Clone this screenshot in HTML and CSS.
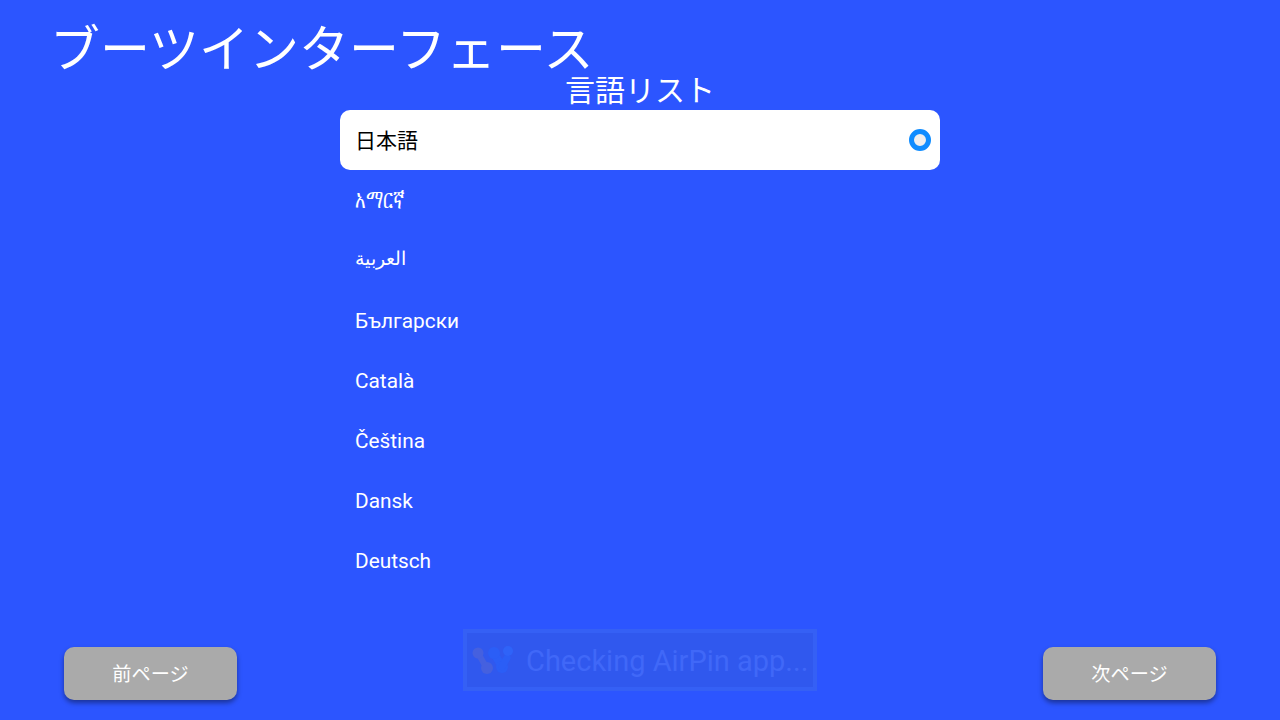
FILE: index.html
```html
<!DOCTYPE html>
<html lang="ja">
<head>
  <meta charset="UTF-8">
  <title>ブーツインターフェース</title>
  <link rel="stylesheet" href="styles.css">
</head>
<body>

  <h1 class="title">ブーツインターフェース</h1>
  <h2 class="subtitle">言語リスト</h2>

  <ul class="lang-list">
    <li class="lang-item selected">日本語<span class="radio"></span></li>
    <li class="lang-item"><span class="amharic">አማርኛ</span></li>
    <li class="lang-item arabic" dir="ltr">العربية</li>
    <li class="lang-item">Български</li>
    <li class="lang-item">Català</li>
    <li class="lang-item">Čeština</li>
    <li class="lang-item">Dansk</li>
    <li class="lang-item">Deutsch</li>
  </ul>

  <div class="footer">
    <button class="page-btn">前ページ</button>
    <button class="page-btn">次ページ</button>
  </div>

  <!-- Toast over the footer -->
  <div class="toast">
    <svg class="toast-icon" width="42" height="32" viewBox="0 0 42 32">
      <path d="M6 8 L14 22" stroke="#4560df" stroke-width="6"/>
      <circle cx="6" cy="8" r="5.5" fill="#4560df"/>
      <circle cx="15" cy="23" r="6" fill="#4560df"/>
      <path d="M22 8 L30 22" stroke="#2b5ef6" stroke-width="8"/>
      <circle cx="22" cy="8" r="6" fill="#2b5ef6"/>
      <circle cx="30" cy="22" r="6" fill="#2b5ef6"/>
      <path d="M30 22 L35 13" stroke="#2b5ef6" stroke-width="7" stroke-linecap="round"/>
      <circle cx="36" cy="6" r="5" fill="#2f63f8"/>
    </svg>
    <span>Checking AirPin app...</span>
  </div>

</body>
</html>
```

FILE: styles.css
```css
* {
  box-sizing: border-box;
}

html, body {
  margin: 0;
  height: 720px;
  overflow: hidden;
}

body {
  position: relative;
  background: #2c55ff;
  color: #fff;
  font-family: Roboto, "Noto Sans CJK JP", "DejaVu Sans", sans-serif;
}

.title {
  margin: 0;
  padding: 20px 0 0 50px;
  font-size: 50px;
  font-weight: 400;
  line-height: 60px;
}

.subtitle {
  margin: -8px 0 0;
  font-size: 30px;
  font-weight: 400;
  line-height: 38px;
  text-align: center;
}

.lang-list {
  list-style: none;
  width: 600px;
  margin: 0 auto;
  padding: 0;
}

.lang-item {
  display: flex;
  align-items: center;
  justify-content: space-between;
  height: 60px;
  padding: 1px 9px 0 15px;
  font-size: 20.8px;
}

.lang-item.selected {
  padding: 0 9px 3px 15px;
  background: #fff;
  border-radius: 10px;
  color: #000;
  font-size: 21px;
}

.amharic {
  display: inline-block;
  margin-top: -3px;
  font-size: 18px;
  transform: scaleY(1.5);
}

.arabic {
  padding-bottom: 4px;
  font-size: 19px;
  font-weight: 300;
}

.radio {
  width: 22px;
  height: 22px;
  margin-top: 3px;
  background: #eee;
  border: 5px solid #0f8cff;
  border-radius: 50%;
}

.footer {
  position: absolute;
  left: 64px;
  right: 64px;
  top: 647px;
  display: flex;
  justify-content: space-between;
}

.page-btn {
  width: 173px;
  height: 53px;
  padding-bottom: 3px;
  background: #aaa;
  border: none;
  border-radius: 10px;
  box-shadow: 0 3px 5px rgba(0, 0, 0, 0.4);
  color: #fff;
  font-family: inherit;
  font-size: 19.2px;
}

.toast {
  position: absolute;
  left: 463px;
  top: 629px;
  display: flex;
  align-items: center;
  gap: 12px;
  width: 354px;
  height: 62px;
  padding: 2px 0 0 5px;
  background: #3058ee;
  border: 4px solid #3560f5;
  color: #4068f8;
  font-size: 29px;
  white-space: nowrap;
}
```
